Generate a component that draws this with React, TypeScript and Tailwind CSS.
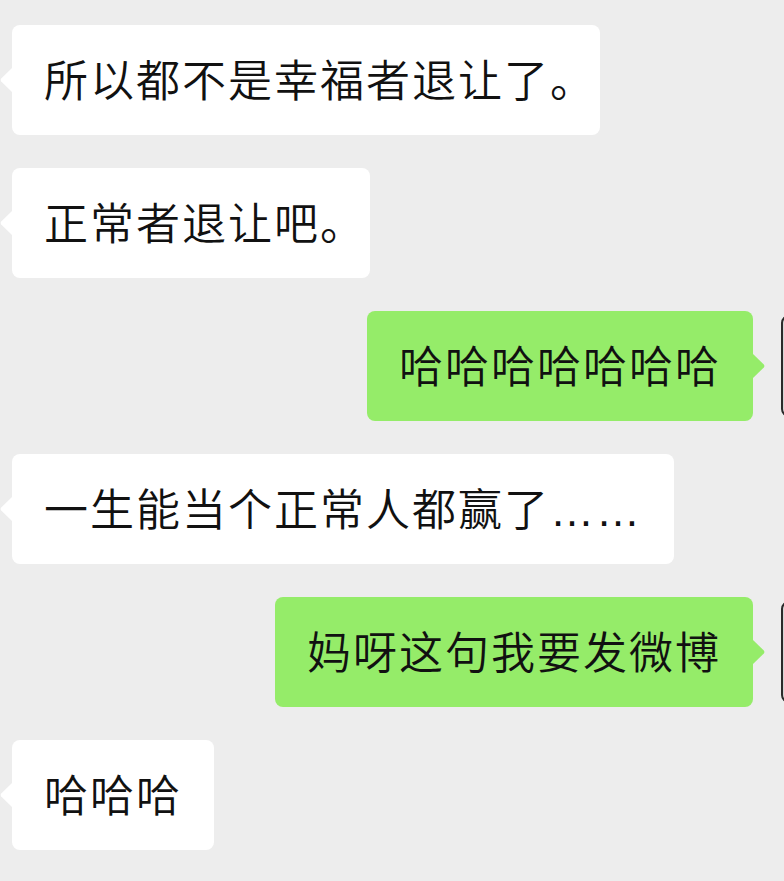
import React from 'react';

type Msg = { side: 'left' | 'right'; text: React.ReactNode };

const Stop = () => <span className="inline-block w-[18px]">。</span>;

const messages: Msg[] = [
  { side: 'left', text: <>所以都不是幸福者退让了<Stop /></> },
  { side: 'left', text: <>正常者退让吧<Stop /></> },
  { side: 'right', text: '哈哈哈哈哈哈哈' },
  { side: 'left', text: '一生能当个正常人都赢了……' },
  { side: 'right', text: '妈呀这句我要发微博' },
  { side: 'left', text: '哈哈哈' },
];

function LeftTail() {
  return (
    <svg
      className="absolute left-[-12px] top-1/2 -translate-y-1/2"
      width="13"
      height="26"
      viewBox="0 0 13 26"
    >
      <path d="M13 0 L1.2 11.6 Q0 13 1.2 14.4 L13 26 Z" fill="#ffffff" />
    </svg>
  );
}

function RightTail() {
  return (
    <svg
      className="absolute right-[-12px] top-1/2 -translate-y-1/2"
      width="13"
      height="26"
      viewBox="0 0 13 26"
    >
      <path d="M0 0 L11.8 11.6 Q13 13 11.8 14.4 L0 26 Z" fill="#95ec69" />
    </svg>
  );
}

function Bubble({ side, text }: Msg) {
  const isLeft = side === 'left';
  return (
    <div
      className={`relative h-[110px] flex items-center px-[32px] pt-[3px] rounded-lg text-[44px] font-[350] tracking-[2px] leading-none text-[#111111] whitespace-nowrap ${
        isLeft ? 'bg-white' : 'bg-[#95ec69]'
      }`}
    >
      {isLeft ? <LeftTail /> : <RightTail />}
      <span>{text}</span>
    </div>
  );
}

export default function App() {
  return (
    <div
      className="w-[784px] min-h-[881px] bg-[#ededed] overflow-hidden flex flex-col gap-[33px] pt-[25px]"
      style={{ fontFamily: '"Liberation Sans", "Noto Sans CJK SC", sans-serif' }}
    >
      {messages.map((m, i) =>
        m.side === 'left' ? (
          <div key={i} className="flex pl-[12px]">
            <Bubble {...m} />
          </div>
        ) : (
          <div key={i} className="flex justify-end items-center">
            <Bubble {...m} />
            {/* avatar, mostly cut off by the right edge */}
            <div className="w-[100px] h-[102px] ml-[28px] -mr-[97px] shrink-0 rounded-lg border-2 border-[#2b2b2b] bg-[#d6d6d6]" />
          </div>
        )
      )}
    </div>
  );
}
